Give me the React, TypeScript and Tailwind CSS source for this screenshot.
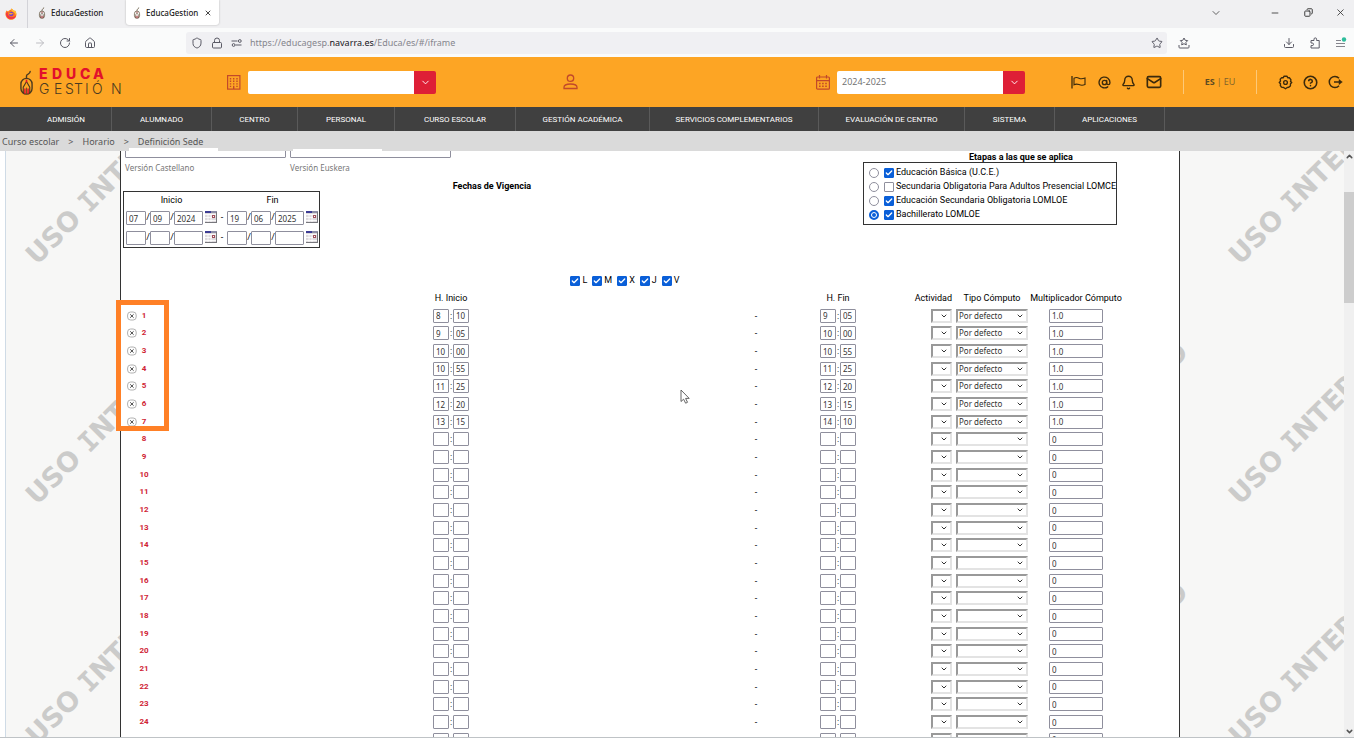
import React from "react";
import {
  ArrowLeft,
  ArrowRight,
  AtSign,
  Bell,
  Check,
  ChevronDown,
  ChevronUp,
  CircleHelp,
  Copy,
  Download,
  House,
  Lock,
  Mail,
  Minus,
  Puzzle,
  RotateCw,
  Shield,
  Star,
  X,
} from "lucide-react";

const GROTESQUE = "font-['Roboto','Liberation_Sans',sans-serif]";
const HUMANIST = "font-['Noto_Sans',sans-serif]";

type Slot = { id: number; start: [string, string]; end: [string, string] };

const filled: Slot[] = [
  { id: 1, start: ["8", "10"], end: ["9", "05"] },
  { id: 2, start: ["9", "05"], end: ["10", "00"] },
  { id: 3, start: ["10", "00"], end: ["10", "55"] },
  { id: 4, start: ["10", "55"], end: ["11", "25"] },
  { id: 5, start: ["11", "25"], end: ["12", "20"] },
  { id: 6, start: ["12", "20"], end: ["13", "15"] },
  { id: 7, start: ["13", "15"], end: ["14", "10"] },
];

const slots: Slot[] = Array.from({ length: 25 }, (_, i) =>
  filled[i] ?? { id: i + 1, start: ["", ""], end: ["", ""] },
);

const menu = [
  "ADMISIÓN",
  "ALUMNADO",
  "CENTRO",
  "PERSONAL",
  "CURSO ESCOLAR",
  "GESTIÓN ACADÉMICA",
  "SERVICIOS COMPLEMENTARIOS",
  "EVALUACIÓN DE CENTRO",
  "SISTEMA",
  "APLICACIONES",
];

const stages = [
  { name: "Educación Básica (U.C.E.)", on: true, main: false },
  { name: "Secundaria Obligatoria Para Adultos Presencial LOMCE", on: false, main: false },
  { name: "Educación Secundaria Obligatoria LOMLOE", on: true, main: false },
  { name: "Bachillerato LOMLOE", on: true, main: true },
];

/* ---------- drawings ---------- */

function FirefoxLogo() {
  return (
    <svg width="12" height="12" viewBox="0 0 24 24" aria-hidden="true">
      <path d="M3 5l3 2c3-3 6-3 7-6 3 2 4 4 5 5l2-1c3 4 4 9 1 14-4 6-13 6-17 1C0 15 0 10 3 5z" fill="#ff7a1c" />
      <path d="M13 1c3 2 4 4 5 5l2-1c3 4 3 8 2 10-1-5-4-7-7-8-2-1-3-3-2-6z" fill="#ffc531" />
      <path d="M2 12c1 8 8 12 15 9 3-1 5-4 5-6-4 4-12 5-15 0-2-2-2-4-1-7-2 0-4 2-4 4z" fill="#f0304f" />
      <circle cx="12.500" cy="12" r="4.600" fill="#7542c9" />
      <path d="M8 10c3-2 5 1 8 0-1 2-3 3-5 3-1 0-3-1-3-3z" fill="#ffa62b" />
    </svg>
  );
}

function MouseMark({ className, accent }: { className: string; accent: string }) {
  return (
    <svg className={className} viewBox="0 0 14 28" fill="none" stroke="#4a3a20" strokeWidth="1.500" aria-hidden="true">
      <path d="M7 9V7c0-3 4-1 4-5" strokeLinecap="round" />
      <rect x="1" y="9.500" width="12" height="17" rx="6" />
      <path d="M3.500 25.500V19L7 13l3.500 6v6.500" strokeWidth="1.200" />
      <path d="M7 11v3" stroke={accent} strokeWidth="1.600" />
      <path d="M5.300 20.500V26M8.700 20.500V26" stroke={accent} strokeWidth="1.600" />
      <path d="M7 19.500V26" strokeWidth="0.800" />
    </svg>
  );
}

function BrandLogo() {
  return (
    <h1 className="flex h-[30px] w-[107px] items-center" aria-label="Educa Gestión">
      <MouseMark className="mt-[1px] h-[27px] w-[13px] shrink-0" accent="#e2102c" />
      <svg width="88" height="32" viewBox="0 0 88 32" className="ml-[5px] shrink-0">
        <g fontFamily="Inter, sans-serif" fontSize="14">
          <text x="1 14 28 42 55" y="13" fontWeight="800" fill="#e2102c">EDUCA</text>
          <text x="1 16 27 36 47 54 73" y="28" fontWeight="300" fill="#4a3a20">GESTIÓN</text>
        </g>
      </svg>
    </h1>
  );
}

function BuildingIcon() {
  return (
    <svg width="14" height="15" viewBox="0 0 14 15" aria-hidden="true">
      <rect x="0.600" y="0.600" width="12.300" height="13.500" fill="none" stroke="#c2492a" strokeWidth="1.200" />
      <path d="M3.500 3v9M6.700 3v9M10 3v9" stroke="#c2492a" strokeWidth="1.400" strokeDasharray="1.400 1.200" />
      <path d="M6.700 12v2" stroke="#c2492a" strokeWidth="1.400" />
    </svg>
  );
}

function PersonIcon() {
  return (
    <svg width="15" height="16" viewBox="0 0 15 16" fill="none" stroke="#c2492a" strokeWidth="1.300" aria-hidden="true">
      <circle cx="7.500" cy="4.200" r="3.200" />
      <path d="M1 14.500v-1.200c0-2.300 3-3.300 6.500-3.300s6.500 1 6.500 3.300v1.200z" />
    </svg>
  );
}

function SchoolYearIcon() {
  return (
    <svg width="14" height="15" viewBox="0 0 14 15" fill="none" stroke="#c2492a" strokeWidth="1.200" aria-hidden="true">
      <rect x="0.600" y="2" width="12.800" height="12.200" rx="1" />
      <path d="M0.600 5.600h12.800M3.500 0v3.500M10.500 0v3.500" />
      <path d="M3 8.500h8.500M3 11.300h8.500" strokeDasharray="1.600 1.500" strokeWidth="1.500" />
    </svg>
  );
}

function FlagIcon() {
  return (
    <svg width="15" height="14" viewBox="0 0 15 14" fill="none" stroke="#3b2a0c" strokeWidth="1.100" aria-hidden="true">
      <path d="M1 1v12.500" strokeWidth="1.300" />
      <path d="M3 3.200c2-1.200 3.500-.8 5 0s3.500.8 6-.2v6.600c-2.500 1-4 .8-6 0s-3-1-5 .2z" />
    </svg>
  );
}

function GearIcon() {
  return (
    <svg width="15" height="15" viewBox="0 0 24 24" fill="none" stroke="#3b2a0c" strokeWidth="2.200" strokeLinejoin="round" aria-hidden="true">
      <path d="M9.500 2h5l1 2.400 2.700 0 2.600 3.400-.8 2.400L22 12l-2 2-.2 3.500-3 2.300-2 .2L12 22l-3-2-3.500-.5-1.800-3L4 14l-2-2 2-2.200-.5-3 2.400-2.600 2.600.2z" />
      <circle cx="12" cy="12" r="3" />
    </svg>
  );
}

function LogoutIcon() {
  return (
    <svg width="15" height="14" viewBox="0 0 15 14" fill="none" stroke="#3b2a0c" strokeWidth="1.500" aria-hidden="true">
      <path d="M11 3.200A5.600 5.600 0 1 0 11 10.800" />
      <path d="M6 7h7" />
      <path d="M11 4.500L14.300 7 11 9.500z" fill="#3b2a0c" strokeWidth="0.500" />
    </svg>
  );
}

function PermissionsIcon() {
  return (
    <svg width="12" height="10" viewBox="0 0 12 10" fill="none" stroke="#5b5b66" aria-hidden="true">
      <path d="M0.500 3h6M4.500 7h6" />
      <circle cx="8.800" cy="3" r="1.400" />
      <circle cx="2.600" cy="7" r="1.400" />
    </svg>
  );
}

function PuzzleIcon() {
  return (
    <svg width="12" height="12" viewBox="0 0 12 12" fill="none" stroke="#5b5b66" strokeLinejoin="round" aria-hidden="true">
      <path d="M2 3.500h3V2.200a1.300 1.300 0 0 1 2.600 0v1.300h2.600v7.500H2V8.600h1.200a1.300 1.300 0 0 0 0-2.600H2z" />
    </svg>
  );
}

function BookmarksIcon() {
  return (
    <svg width="12" height="12" viewBox="0 0 12 12" fill="none" stroke="#5b5b66" strokeLinejoin="round" aria-hidden="true">
      <path d="M6 1l1.200 2.300 2.500.3-1.800 1.800.4 2.500L6 6.700 3.700 7.900l.4-2.500-1.800-1.800 2.500-.3z" />
      <path d="M1 8v2.200c0 .5.300.8.800.8h8.400c.5 0 .8-.3.800-.8V8" />
    </svg>
  );
}

function MiniCalendar() {
  return (
    <svg width="12" height="12" viewBox="0 0 12 12" aria-hidden="true">
      <rect width="12" height="12" fill="#dedade" />
      <path d="M0 0h6v2H0z" fill="#3c3c94" />
      <path d="M6 0h6v2H6z" fill="#8d8da6" />
      <path d="M0 3.500h11M0 6.500h7M0 9.500h11M3 3v8M6 3v8" stroke="#fff" strokeWidth="0.800" />
      <rect x="7.500" y="4.500" width="2" height="2" fill="#fff" stroke="#a0505c" />
      <path d="M11.500 1v11M0 11.500h12" stroke="#77777c" strokeWidth="1" />
    </svg>
  );
}

function DeleteIcon() {
  return (
    <svg width="10" height="10" viewBox="0 0 10 10" fill="none" aria-hidden="true">
      <rect x="0.600" y="1" width="8.600" height="8" rx="3" stroke="#a8a8a8" strokeWidth="0.900" />
      <path d="M3.200 3.300l3.400 3.400M6.600 3.300L3.200 6.700" stroke="#333" strokeWidth="0.900" />
    </svg>
  );
}

function Watermark() {
  const columns = [37, 1037, 1240];
  const lines = [115, 355, 595];
  return (
    <svg className="pointer-events-none absolute inset-0 size-full" aria-hidden="true">
      <g fontFamily="'DejaVu Sans', sans-serif" fontWeight="700" fontSize="27" fill="#cbcbca">
        {columns.map((x) =>
          lines.map((y) => (
            <text key={`${x}-${y}`} transform={`translate(${x} ${y}) rotate(-45)`}>
              USO <tspan fontFamily="'DejaVu Sans Mono', monospace">I</tspan>NTERNO
            </text>
          )),
        )}
      </g>
    </svg>
  );
}

function Pointer() {
  return (
    <svg className="pointer-events-none absolute top-[238px] left-[680px]" width="11" height="16" viewBox="0 0 11 16" aria-hidden="true">
      <path d="M1 1v11.500l2.600-2.300 2 4 1.900-.9-1.900-3.900h3.600z" fill="#fff" stroke="#555" strokeWidth="0.900" />
    </svg>
  );
}

/* ---------- form parts ---------- */

function Tick({ label, on }: { label: string; on: boolean }) {
  return (
    <span className="relative grid size-[10px] shrink-0 place-items-center">
      <input
        type="checkbox"
        aria-label={label}
        defaultChecked={on}
        className="peer size-[10px] appearance-none rounded-[1px] border border-[#8f8f9d] bg-white checked:border-[#0a5fd8] checked:bg-[#0a5fd8]"
      />
      <Check className="pointer-events-none absolute hidden size-2 text-white peer-checked:block" strokeWidth={4} />
    </span>
  );
}

function Box({ label, value = "", size }: { label: string; value?: string; size: string }) {
  return (
    <input
      type="text"
      aria-label={label}
      defaultValue={value}
      className={`h-[14px] rounded-[1px] border border-[#8f8f9d] bg-white px-[2px] text-[8px] leading-[12px] text-[#333] ${HUMANIST} ${size}`}
    />
  );
}

function Drop({ label, value, size }: { label: string; value: string; size: string }) {
  return (
    <span className={`relative inline-block h-[14px] align-top ${size}`}>
      <select
        aria-label={label}
        defaultValue={value}
        className={`block h-[14px] w-full appearance-none border-t-2 border-r-2 border-b-2 border-l-2 border-t-[#999] border-r-[#e3e3e3] border-b-[#e3e3e3] border-l-[#999] bg-white pl-[1px] text-[8px] leading-[10px] text-[#333] ${HUMANIST}`}
      >
        <option value={value}>{value}</option>
      </select>
      <ChevronDown className="pointer-events-none absolute top-[3px] right-1 size-2 text-[#333]" strokeWidth={3} />
    </span>
  );
}

function TimePair({ label, value }: { label: string; value: [string, string] }) {
  return (
    <div className="flex items-center justify-center">
      <Box label={`${label} hora`} value={value[0]} size="w-4" />
      <span className="w-1 text-center leading-[12px]">:</span>
      <Box label={`${label} minutos`} value={value[1]} size="w-4" />
    </div>
  );
}

function DateGroup({ label, value }: { label: string; value: [string, string, string] }) {
  return (
    <div className="flex items-center">
      <Box label={`${label} día`} value={value[0]} size="w-5" />
      <span className="w-1 text-center">/</span>
      <Box label={`${label} mes`} value={value[1]} size="w-5" />
      <span className="w-1 text-center">/</span>
      <Box label={`${label} año`} value={value[2]} size="w-[29px]" />
      <button type="button" aria-label={`${label} calendario`} className="ml-[2px] self-start">
        <MiniCalendar />
      </button>
    </div>
  );
}

function Combo({ label, value }: { label: string; value: string }) {
  return (
    <div className="flex h-[23px] w-[188px]">
      <input
        type="text"
        aria-label={label}
        defaultValue={value}
        className="w-0 flex-1 rounded-l-[2px] bg-white px-[5px] font-['Open_Sans',sans-serif] text-[9px] text-[#6d6d6d]"
      />
      <button type="button" aria-label={`Abrir ${label}`} className="grid w-[22px] place-items-center rounded-r-[2px] bg-[#de1f36] text-white">
        <ChevronDown className="size-[11px]" strokeWidth={2} />
      </button>
    </div>
  );
}

/* ---------- page regions ---------- */

function BrowserChrome() {
  return (
    <header className="shrink-0 text-[#5b5b66]">
      <div className="flex h-7 items-center bg-[#f0f0f2] font-['Noto_Sans',sans-serif] text-[8px] font-medium text-[#222]">
        <div className="flex h-7 w-7 items-center border-r border-[#d3d3d8] pl-[5px]">
          <FirefoxLogo />
        </div>
        <button type="button" className="flex h-[26px] w-[98px] items-center gap-[5px] self-start pl-[10px]">
          <MouseMark className="h-3 w-2" accent="#c9364a" />
          EducaGestion
        </button>
        <div className="flex h-[25px] w-[93px] items-center gap-[5px] self-start rounded-b-[3px] bg-white pl-[7px] shadow-[0_0_2px_#aaa]">
          <MouseMark className="h-3 w-2" accent="#c9364a" />
          <span>EducaGestion</span>
          <button type="button" aria-label="Cerrar pestaña" className="ml-px">
            <X className="size-2" strokeWidth={2.5} />
          </button>
        </div>
        <div className="ml-auto flex h-[25px] items-center self-start pr-[8px] text-[#333]">
          <button type="button" aria-label="Lista de pestañas" className="mr-12"><ChevronDown className="size-3" strokeWidth={1.5} /></button>
          <button type="button" aria-label="Minimizar" className="mr-6"><Minus className="size-[10px]" strokeWidth={2} /></button>
          <button type="button" aria-label="Restaurar" className="mr-[22px]"><Copy className="size-[9px] -scale-x-100" strokeWidth={2.5} /></button>
          <button type="button" aria-label="Cerrar"><X className="size-[11px]" strokeWidth={1.8} /></button>
        </div>
      </div>
      <div className="flex h-[29px] items-center bg-[#fafbfb] pr-[7px] pl-2">
        <button type="button" aria-label="Atrás" className="mr-[14px]"><ArrowLeft className="size-3" strokeWidth={2} /></button>
        <button type="button" aria-label="Adelante" className="mr-[13px] text-[#bdbdc2]"><ArrowRight className="size-3" strokeWidth={2} /></button>
        <button type="button" aria-label="Recargar" className="mr-[13px]"><RotateCw className="size-3" strokeWidth={2} /></button>
        <button type="button" aria-label="Inicio"><House className="size-3" strokeWidth={2} /></button>
        <div className="ml-[90px] flex h-[22px] flex-1 items-center rounded-[3px] bg-[#f0f0f3] pr-1 pl-[5px]">
          <Shield className="mr-2 size-3" strokeWidth={2} />
          <Lock className="mr-2 size-3" strokeWidth={2} />
          <PermissionsIcon />
          <p className="ml-[7px] font-['Noto_Sans',sans-serif] text-[9px] text-[#85858d]">
            https://educagesp.<span className="text-[#15141a]">navarra.es</span>/Educa/es/#/iframe
          </p>
          <button type="button" aria-label="Añadir a marcadores" className="ml-auto"><Star className="size-3" strokeWidth={2} /></button>
        </div>
        <button type="button" aria-label="Marcadores" className="mr-[93px] ml-[11px]"><BookmarksIcon /></button>
        <button type="button" aria-label="Descargas" className="mr-[14px]"><Download className="size-3" strokeWidth={2} /></button>
        <button type="button" aria-label="Extensiones" className="mr-[14px]"><PuzzleIcon /></button>
        <button type="button" aria-label="Menú">
          <svg width="12" height="12" viewBox="0 0 12 12" aria-hidden="true">
            <path d="M1 3.500h5M1 6.500h9M1 9.500h9" stroke="#85858d" />
            <circle cx="9" cy="2.500" r="2.200" fill="#2ebd9b" />
          </svg>
        </button>
      </div>
    </header>
  );
}

function AppHeader() {
  return (
    <div className="flex h-[50px] shrink-0 items-center bg-[#fda524] pr-[11px] pl-5">
      <BrandLogo />
      <div className="ml-[100px] flex items-center gap-[7px]">
        <BuildingIcon />
        <Combo label="Centro" value="" />
      </div>
      <button type="button" aria-label="Usuario" className="ml-[127px]"><PersonIcon /></button>
      <div className="ml-auto flex items-center gap-[7px]">
        <SchoolYearIcon />
        <Combo label="Curso" value="2024-2025" />
      </div>
      <div className="ml-[46px] flex items-center text-[#3b2a0c]">
        <button type="button" aria-label="Avisos"><FlagIcon /></button>
        <button type="button" aria-label="Correo" className="ml-3"><AtSign className="size-[13px]" strokeWidth={2.5} /></button>
        <button type="button" aria-label="Notificaciones" className="ml-[10px]"><Bell className="size-[15px]" strokeWidth={2.2} /></button>
        <button type="button" aria-label="Mensajes" className="ml-[10px]"><Mail className="size-4" strokeWidth={2.5} /></button>
      </div>
      <div className="ml-[21px] flex h-6 w-[74px] items-center justify-center border-x border-[#fdc978] font-['Open_Sans',sans-serif] text-[9px] text-[#80612b]">
        <a href="#es" className="font-bold text-[#5f4b22]">ES</a>
        <span className="mx-[2px]">|</span>
        <a href="#eu">EU</a>
      </div>
      <div className="ml-[21px] flex items-center gap-[10px] text-[#3b2a0c]">
        <button type="button" aria-label="Configuración"><GearIcon /></button>
        <button type="button" aria-label="Ayuda"><CircleHelp className="size-[15px]" strokeWidth={2.5} /></button>
        <button type="button" aria-label="Salir"><LogoutIcon /></button>
      </div>
    </div>
  );
}

function ScheduleTable() {
  return (
    <table className="w-full table-fixed border-collapse">
      <colgroup>
        <col className="w-[46px]" />
        <col />
        <col className="w-[42px]" />
        <col className="w-[122px]" />
        <col className="w-[55px]" />
        <col className="w-[76px]" />
        <col className="w-[92px]" />
        <col className="w-[57px]" />
      </colgroup>
      <thead>
        <tr className="h-[17px] [&>th]:p-0 [&>th]:font-normal">
          <th />
          <th>H. Inicio</th>
          <th />
          <th>H. Fin</th>
          <th><div className="flex justify-end pr-[2px]">Actividad</div></th>
          <th>Tipo Cómputo</th>
          <th className="whitespace-nowrap">Multiplicador Cómputo</th>
          <th />
        </tr>
      </thead>
      <tbody>
        {slots.map((s) => {
          const used = s.start[0] !== "";
          return (
            <tr key={s.id} className="h-[18px] leading-[14px] nth-[3n+1]:h-[17px] [&>td]:p-0">
              <td>
                <div className="flex h-[14px] items-center pl-[6px]">
                  <span className="w-[10px]">
                    {used && (
                      <button type="button" aria-label={`Eliminar tramo ${s.id}`} className="block">
                        <DeleteIcon />
                      </button>
                    )}
                  </span>
                  <b className="w-[14px] text-center text-[8px] text-[#cf2434]">{s.id}</b>
                </div>
              </td>
              <td><TimePair label={`Inicio ${s.id}`} value={s.start} /></td>
              <td className="text-center">-</td>
              <td><TimePair label={`Fin ${s.id}`} value={s.end} /></td>
              <td>
                <div className="flex justify-end pr-[2px]">
                  <Drop label={`Actividad ${s.id}`} value="" size="w-[21px]" />
                </div>
              </td>
              <td>
                <div className="flex justify-center">
                  <Drop label={`Tipo cómputo ${s.id}`} value={used ? "Por defecto" : ""} size="w-[72px]" />
                </div>
              </td>
              <td>
                <div className="flex justify-center">
                  <Box label={`Multiplicador ${s.id}`} value={used ? "1.0" : "0"} size="w-[54px]" />
                </div>
              </td>
              <td />
            </tr>
          );
        })}
      </tbody>
    </table>
  );
}

function SheetTop() {
  return (
    <div className="flex h-[121px]">
      <div className="flex-1">
        <div className="-mt-2 flex gap-1 pl-1 text-[8px] leading-[12px] text-[#777]">
          {["Versión Castellano", "Versión Euskera"].map((name) => (
            <label key={name} className={`block w-[161px] ${HUMANIST}`}>
              <input type="text" className="mb-1 block h-[15px] w-full rounded-[1px] border border-[#8f8f9d] bg-white" />
              {name}
            </label>
          ))}
        </div>
        <h2 className="mt-[7px] text-center font-bold leading-[10px]">Fechas de Vigencia</h2>
        <div className="ml-[2px] grid w-[197px] grid-cols-[91px_10px_91px] border border-[#333] pt-px pl-[2px]">
          <div className="text-center leading-[14px]">Inicio</div>
          <span />
          <div className="text-center leading-[14px]">Fin</div>
          <div className="flex h-[22px] items-center"><DateGroup label="Inicio" value={["07", "09", "2024"]} /></div>
          <span className="grid h-[22px] place-items-center">-</span>
          <div className="flex h-[22px] items-center"><DateGroup label="Fin" value={["19", "06", "2025"]} /></div>
          <div className="flex h-[18px] items-center"><DateGroup label="Inicio 2" value={["", "", ""]} /></div>
          <span className="grid h-[18px] place-items-center">-</span>
          <div className="flex h-[18px] items-center"><DateGroup label="Fin 2" value={["", "", ""]} /></div>
        </div>
      </div>
      <fieldset className="w-[315px]">
        <legend className="h-[11px] w-full text-center font-bold leading-[12px]">Etapas a las que se aplica</legend>
        <div className="mr-[62px] border border-[#333] pt-[3px] pb-[2px] pl-[5px]">
          {stages.map((s) => (
            <div key={s.name} className="flex h-[14px] items-center whitespace-nowrap">
              <input
                type="radio"
                name="stage"
                aria-label={`Principal: ${s.name}`}
                defaultChecked={s.main}
                className="mr-[5px] size-[10px] appearance-none rounded-full border border-[#8f8f9d] bg-white checked:border-2 checked:border-[#0a5fd8] checked:bg-[#0a5fd8] checked:shadow-[inset_0_0_0_1px_white]"
              />
              <Tick label={s.name} on={s.on} />
              <span className="ml-[2px]">{s.name}</span>
            </div>
          ))}
        </div>
      </fieldset>
    </div>
  );
}

export default function App() {
  return (
    <div className="flex h-screen flex-col overflow-hidden bg-white">
      <BrowserChrome />
      <AppHeader />
      <nav className={`grid h-6 shrink-0 grid-cols-[91px_100px_86px_97px_121px_134px_169px_146px_90px_110px] bg-[#404040] pl-[21px] text-[8px] text-white ${GROTESQUE}`}>
        {menu.map((m) => (
          <a key={m} href="#menu" className="grid place-items-center border-r border-[#5a5a5a] pt-px whitespace-nowrap">
            {m}
          </a>
        ))}
      </nav>
      <div className="flex h-5 shrink-0 items-center bg-[#dadada] pt-[2px] pl-[2px] font-['Noto_Sans',sans-serif] text-[9px] text-[#555]">
        <a href="#curso">Curso escolar</a>
        <span className="mx-[9px]">&gt;</span>
        <a href="#horario">Horario</a>
        <span className="mx-[9px]">&gt;</span>
        <a href="#sede">Definición Sede</a>
      </div>
      <main className={`relative mb-[2px] flex min-h-0 flex-1 border-b border-[#bfc3c6] text-[9px] text-black ${GROTESQUE}`}>
        <div className="relative ml-[5px] flex-1 overflow-hidden border-l border-[#cfdbe6] bg-[#f7f7f6]">
          <div className="absolute inset-y-0 -left-[6px] right-0">
            <Watermark />
          </div>
          <div className="relative mr-[164px] ml-[114px] min-h-full border-x border-[#333] bg-white">
            <SheetTop />
            <div className="flex h-[18px] items-center justify-center gap-[5px] pr-[50px]">
              {["L", "M", "X", "J", "V"].map((d) => (
                <span key={d} className="flex items-center gap-[2px]">
                  <Tick label={d} on />
                  {d}
                </span>
              ))}
            </div>
            <ScheduleTable />
            <div className="pointer-events-none absolute top-[149px] -left-[5px] h-[131px] w-[53px] border-[5px] border-[#ff8026]" />
          </div>
        </div>
        <div className="flex w-[10px] flex-col items-center bg-[#f0f0f0] text-[#555]" role="presentation">
          <ChevronUp className="mt-[1px] size-[9px] shrink-0" strokeWidth={4} />
          <div className="mt-[31px] h-[111px] w-full bg-[#cdcdcd]" />
          <ChevronDown className="mt-auto mb-[1px] size-[9px] shrink-0" strokeWidth={4} />
        </div>
        <div className="absolute -top-[3px] left-[129px] h-1 w-[89px] bg-white" />
        <div className="absolute -top-[2px] left-[293px] h-1 w-[89px] bg-white" />
        <Pointer />
      </main>
    </div>
  );
}
